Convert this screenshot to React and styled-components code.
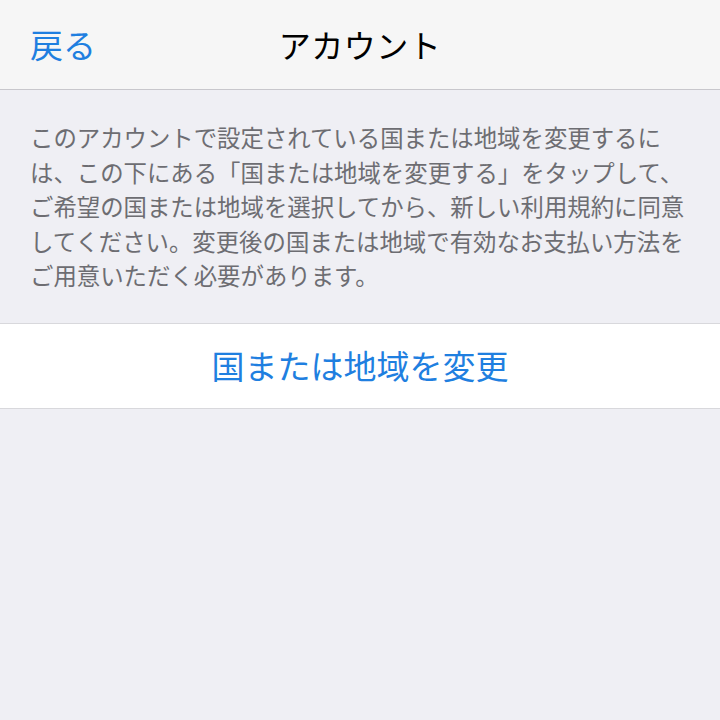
import React from 'react';
import styled, { createGlobalStyle } from 'styled-components';

const GlobalStyle = createGlobalStyle`
  html, body {
    margin: 0;
    padding: 0;
    background: #efeff4;
  }
  body {
    font-family: "Noto Sans CJK JP", "Noto Sans", sans-serif;
  }
`;

const Screen = styled.div`
  width: 720px;
  min-height: 720px;
  background: #efeff4;
  display: flex;
  flex-direction: column;
`;

const NavBar = styled.header`
  height: 90px;
  box-sizing: border-box;
  background: #f6f6f6;
  border-bottom: 1px solid #c8c7cc;
  display: grid;
  grid-template-columns: 1fr auto 1fr;
  align-items: center;
  padding: 0 30px 2px;
`;

const BackButton = styled.button`
  justify-self: start;
  background: none;
  border: none;
  padding: 0;
  font-family: inherit;
  font-size: 33px;
  color: #1f7fe0;
  cursor: pointer;
`;

const Title = styled.h1`
  margin: 0;
  font-size: 32px;
  font-weight: 400;
  color: #000;
  letter-spacing: 0.5px;
`;

const Note = styled.p`
  margin: 0;
  padding: 30px 30px 30px;
  font-size: 23.4px;
  line-height: 34.5px;
  color: #6d6d72;
  white-space: nowrap;
`;

const Cell = styled.button`
  height: 86px;
  background: #fff;
  border: none;
  border-top: 1px solid #d8d8dc;
  border-bottom: 1px solid #d8d8dc;
  display: flex;
  align-items: center;
  justify-content: center;
  font-family: inherit;
  font-size: 33px;
  color: #1f7fe0;
  padding: 0 0 2px;
  cursor: pointer;
`;

const lines = [
  'このアカウントで設定されている国または地域を変更するに',
  'は、この下にある「国または地域を変更する」をタップして、',
  'ご希望の国または地域を選択してから、新しい利用規約に同意',
  'してください。変更後の国または地域で有効なお支払い方法を',
  'ご用意いただく必要があります。',
];

export default function App() {
  return (
    <Screen>
      <GlobalStyle />
      <NavBar>
        <BackButton>戻る</BackButton>
        <Title>アカウント</Title>
        <span />
      </NavBar>
      <Note>
        {lines.map((l, i) => (
          <React.Fragment key={i}>
            {l}
            {i < lines.length - 1 && <br />}
          </React.Fragment>
        ))}
      </Note>
      <Cell>国または地域を変更</Cell>
    </Screen>
  );
}
